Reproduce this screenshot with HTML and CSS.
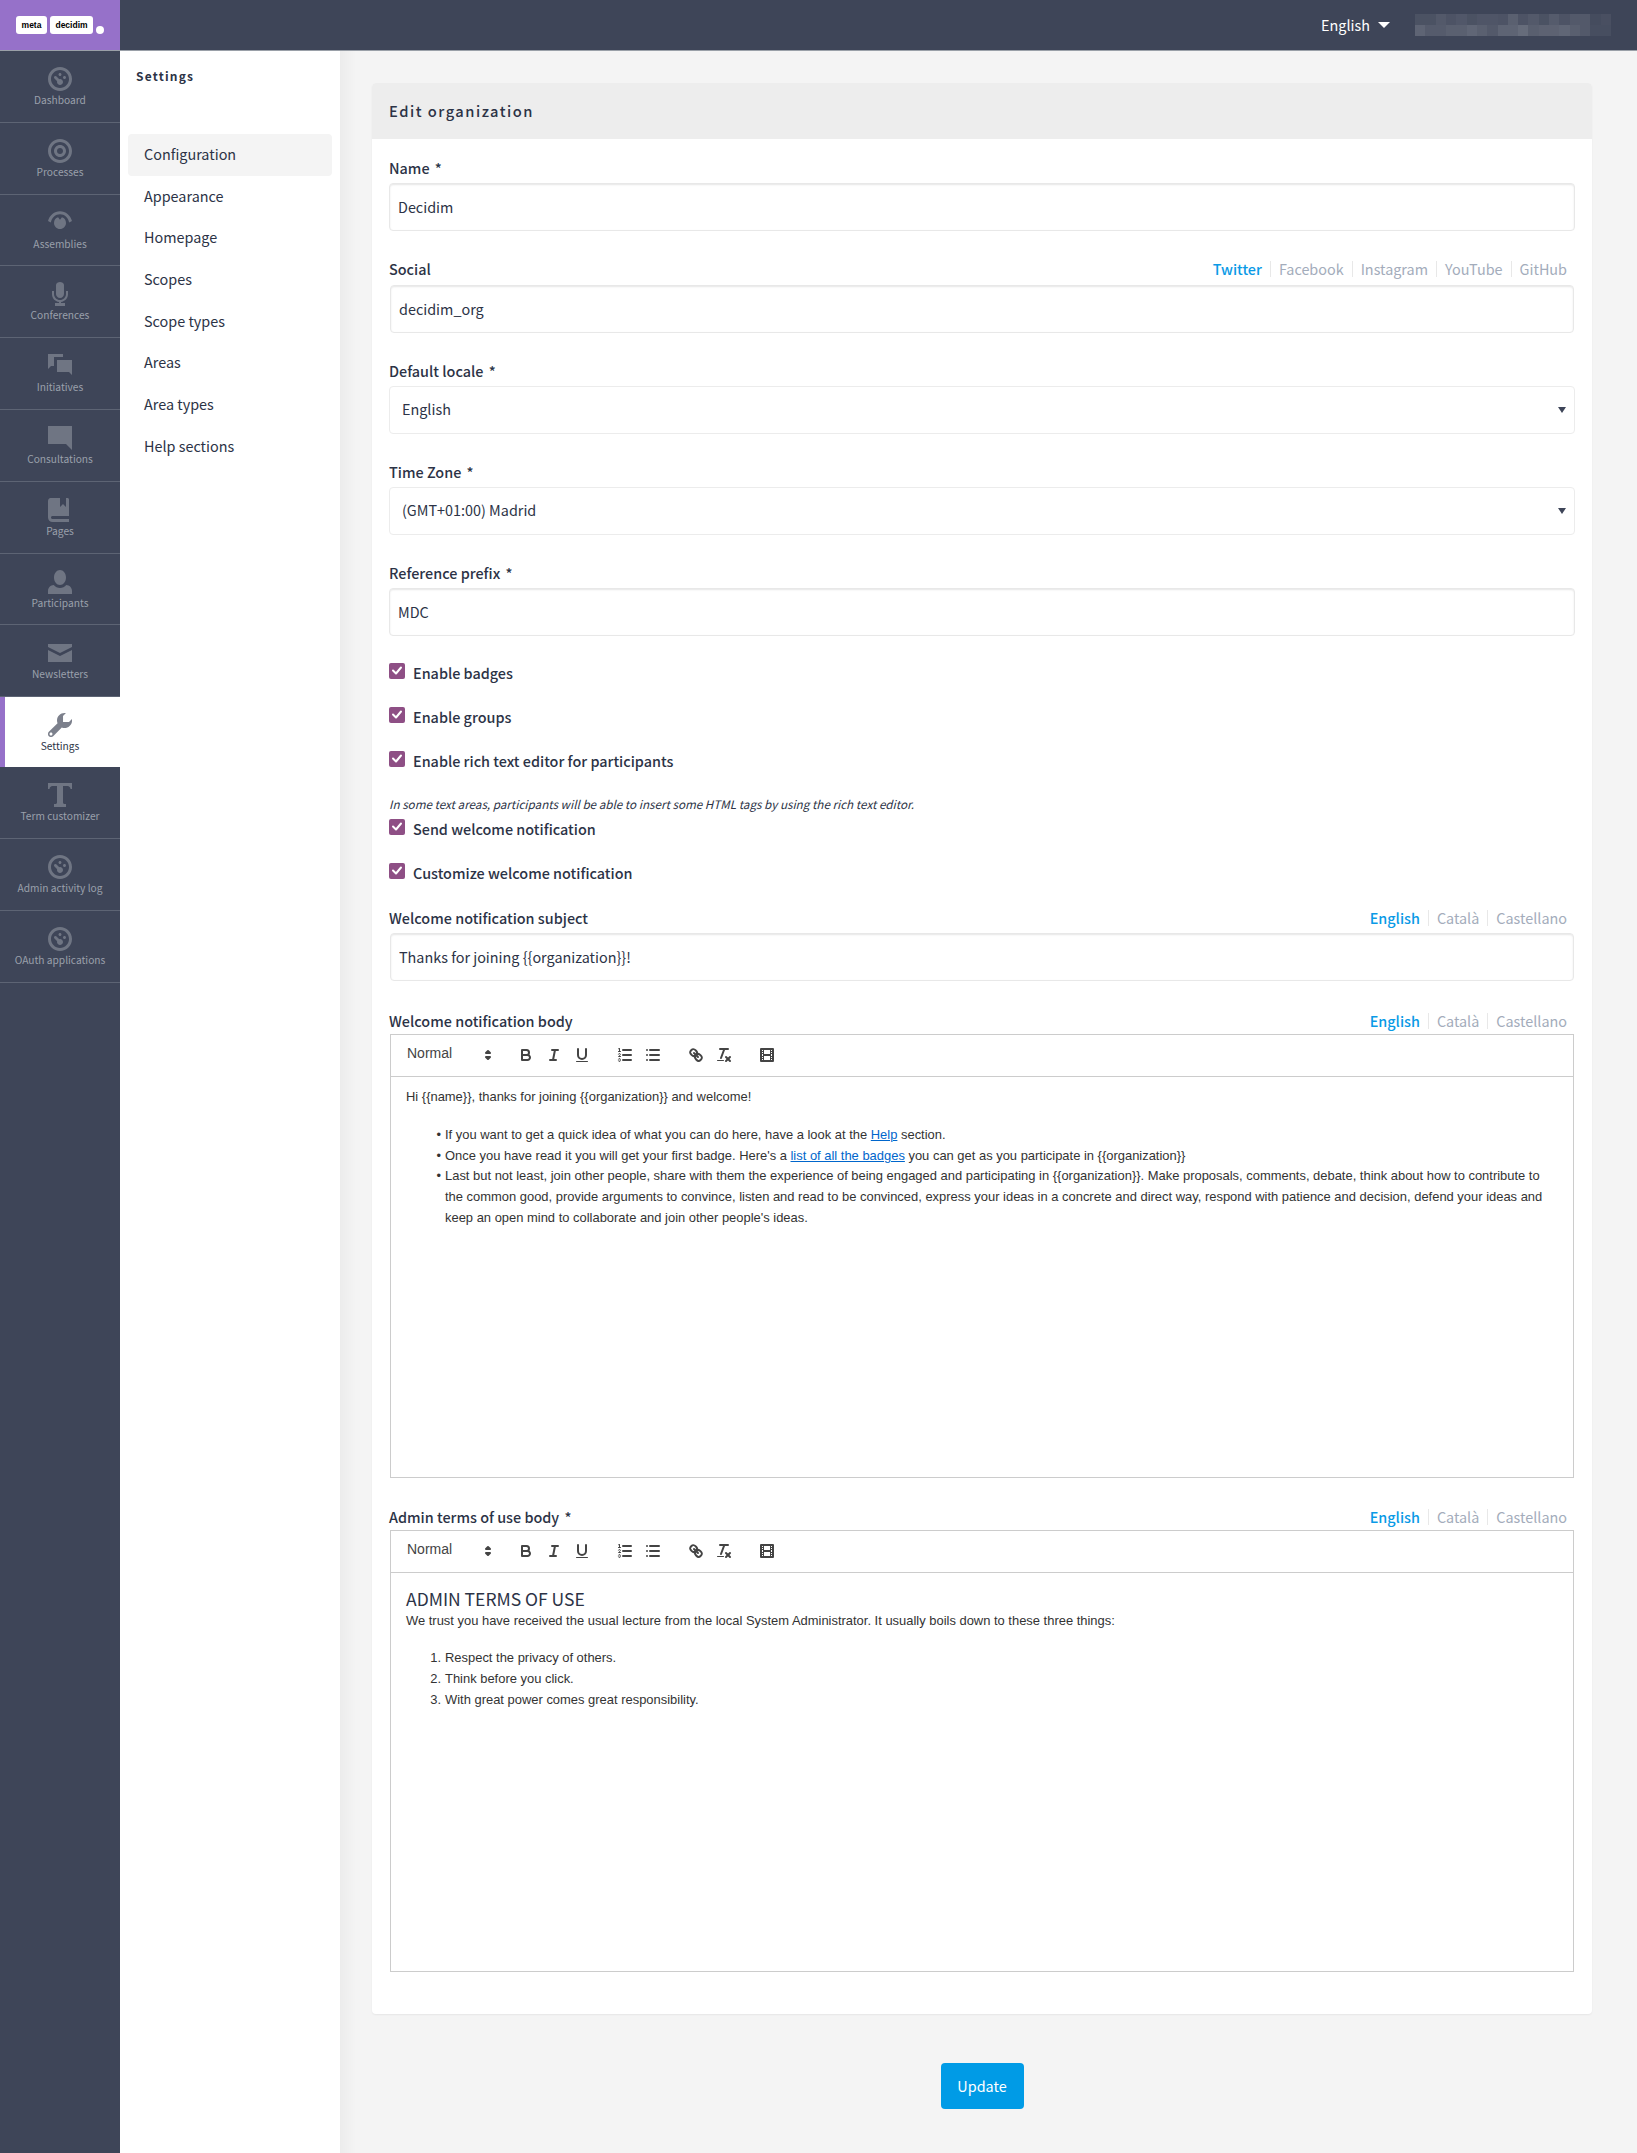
FILE: index.html
```html
<!DOCTYPE html>
<html lang="en">
<head>
<meta charset="utf-8">
<title>Edit organization</title>
<link rel="stylesheet" href="styles.css">
</head>
<body>
<header class="topbar">
  <div class="logo">
    <span class="logo-chip logo-chip-meta">meta</span>
    <span class="logo-chip logo-chip-decidim">decidim</span>
    <span class="logo-dot"></span>
  </div>
  <div class="topbar-right">
    <span class="lang">English</span>
    <span class="lang-caret"></span>
    <svg class="mosaic" width="196" height="22" viewBox="0 0 19 2" preserveAspectRatio="none" shape-rendering="crispEdges">
      <g fill="#fff">
        <rect x="0" y="0" width="2" height="1" opacity=".07"/><rect x="2" y="0" width="1" height="1" opacity=".11"/><rect x="3" y="0" width="1" height="1" opacity=".08"/><rect x="4" y="0" width="1" height="1" opacity=".1"/><rect x="5" y="0" width="1" height="1" opacity=".07"/><rect x="6" y="0" width="2" height="1" opacity=".09"/><rect x="8" y="0" width="1" height="1" opacity=".08"/><rect x="9" y="0" width="1" height="1" opacity=".15"/><rect x="10" y="0" width="1" height="1" opacity=".08"/><rect x="11" y="0" width="1" height="1" opacity=".11"/><rect x="12" y="0" width="1" height="1" opacity=".07"/><rect x="13" y="0" width="1" height="1" opacity=".12"/><rect x="14" y="0" width="1" height="1" opacity=".08"/><rect x="15" y="0" width="2" height="1" opacity=".11"/><rect x="17" y="0" width="1" height="1" opacity=".04"/><rect x="18" y="0" width="1" height="1" opacity=".06"/>
        <rect x="0" y="1" width="1" height="1" opacity=".17"/><rect x="1" y="1" width="2" height="1" opacity=".12"/><rect x="3" y="1" width="2" height="1" opacity=".15"/><rect x="5" y="1" width="1" height="1" opacity=".18"/><rect x="6" y="1" width="1" height="1" opacity=".15"/><rect x="7" y="1" width="1" height="1" opacity=".11"/><rect x="8" y="1" width="2" height="1" opacity=".17"/><rect x="10" y="1" width="1" height="1" opacity=".21"/><rect x="11" y="1" width="1" height="1" opacity=".14"/><rect x="12" y="1" width="2" height="1" opacity=".16"/><rect x="14" y="1" width="1" height="1" opacity=".18"/><rect x="15" y="1" width="1" height="1" opacity=".14"/><rect x="16" y="1" width="1" height="1" opacity=".11"/><rect x="17" y="1" width="1" height="1" opacity=".05"/><rect x="18" y="1" width="1" height="1" opacity=".05"/>
      </g>
    </svg>
  </div>
</header>

<div class="shell">
  <nav class="rail">
    <a class="rail-item"><svg class="rail-icon" viewBox="0 0 8 8"><path d="M4 0c-2.2 0-4 1.8-4 4s1.8 4 4 4 4-1.8 4-4-1.8-4-4-4zm0 1c1.66 0 3 1.34 3 3s-1.34 3-3 3-3-1.34-3-3 1.34-3 3-3zm0 1c-.28 0-.5.22-.5.5s.22.5.5.5.5-.22.5-.5-.22-.5-.5-.5zm-1.66 1a.5.5 0 0 0-.19.84l.91.91c-.02.08-.06.16-.06.25 0 .55.45 1 1 1s1-.45 1-1-.45-1-1-1c-.09 0-.17.04-.25.06l-.91-.91a.5.5 0 0 0-.44-.16.5.5 0 0 0-.06 0zm3.16 0c-.28 0-.5.22-.5.5s.22.5.5.5.5-.22.5-.5-.22-.5-.5-.5z"/></svg><span>Dashboard</span></a>
    <a class="rail-item"><svg class="rail-icon" viewBox="0 0 8 8"><path d="M4 0c-2.2 0-4 1.8-4 4s1.8 4 4 4 4-1.8 4-4-1.8-4-4-4zm0 1c1.66 0 3 1.34 3 3s-1.34 3-3 3-3-1.34-3-3 1.34-3 3-3zm0 1c-1.1 0-2 .9-2 2s.9 2 2 2 2-.9 2-2-.9-2-2-2zm0 1c.56 0 1 .44 1 1s-.44 1-1 1-1-.44-1-1 .44-1 1-1z"/></svg><span>Processes</span></a>
    <a class="rail-item"><svg class="rail-icon" viewBox="0 0 8 8"><path d="M4 .1C2.1.1.5 1.5 0 3.3l.95.55C1.3 2.2 2.5 1.1 4 1.1s2.7 1.1 3.05 2.75L8 3.3C7.5 1.5 5.9.1 4 .1z"/><path d="M3.35 2.1 4 2.9l.65-.8C5.5 2.35 6 3.1 6 4c0 1.1-.9 2-2 2s-2-.9-2-2c0-.9.5-1.65 1.35-1.9z"/></svg><span>Assemblies</span></a>
    <a class="rail-item"><svg class="rail-icon" viewBox="0 0 8 8"><path d="M4 0c-.55 0-1.33.35-1.33 1v3c0 .7.6 1.33 1.33 1.33S5.33 4.7 5.33 4V1C5.33.35 4.55 0 4 0z"/><path d="M1.33 3h.67v1c0 1.1.9 2 2 2s2-.9 2-2V3h.67v1c0 1.4-1 2.5-2.33 2.65V7h1.33v1H2.33V7h1.34v-.35C2.33 6.5 1.33 5.4 1.33 4V3z"/></svg><span>Conferences</span></a>
    <a class="rail-item"><svg class="rail-icon" viewBox="0 0 8 8"><path d="M0 0v5l1-1h1v-3h3v-1h-5zm3 2v4h4l1 1v-5h-5z"/></svg><span>Initiatives</span></a>
    <a class="rail-item"><svg class="rail-icon" viewBox="0 0 8 8"><path d="M.09 0c-.06 0-.09.04-.09.09v5.81c0 .05.04.09.09.09h5.91l2 2v-7.91c0-.06-.04-.09-.09-.09h-7.81z"/></svg><span>Consultations</span></a>
    <a class="rail-item"><svg class="rail-icon" viewBox="0 0 8 8"><path d="M1 0c-.07 0-.13.01-.19.03-.39.08-.7.39-.78.78-.03.06-.03.12-.03.19v5.5c0 .83.67 1.5 1.5 1.5h5.5v-1h-5.5c-.28 0-.5-.22-.5-.5s.22-.5.5-.5h5.5v-5.5c0-.28-.22-.5-.5-.5h-.5v3l-1-1-1 1v-3h-3z"/></svg><span>Pages</span></a>
    <a class="rail-item"><svg class="rail-icon" viewBox="0 0 8 8"><path d="M4 0c-1.1 0-2 1.12-2 2.5s.9 2.5 2 2.5 2-1.12 2-2.5-.9-2.5-2-2.5zm-2.09 5c-1.06.05-1.91.92-1.91 2v1h8v-1c0-1.08-.84-1.95-1.91-2-.54.61-1.28 1-2.09 1-.81 0-1.55-.39-2.09-1z"/></svg><span>Participants</span></a>
    <a class="rail-item"><svg class="rail-icon" viewBox="0 0 8 8"><path d="M0 1v1l4 2 4-2v-1h-8zm0 2v4h8v-4l-4 2-4-2z"/></svg><span>Newsletters</span></a>
    <a class="rail-item rail-item-active"><svg class="rail-icon" viewBox="0 0 8 8"><path d="M5.5 0c-1.38 0-2.5 1.12-2.5 2.5 0 .32.08.62.19.91l-2.91 2.88c-.39.39-.39 1.05 0 1.44.2.2.46.28.72.28.26 0 .52-.09.72-.28l2.88-2.91c.28.11.58.19.91.19 1.38 0 2.5-1.12 2.5-2.5 0-.16 0-.32-.03-.47l-.97.97h-2v-2l.97-.97c-.15-.03-.31-.03-.47-.03zm-4.5 6.5c.28 0 .5.22.5.5s-.22.5-.5.5-.5-.22-.5-.5.22-.5.5-.5z"/></svg><span>Settings</span></a>
    <a class="rail-item"><svg class="rail-icon" viewBox="0 0 8 8"><path d="M0 0v2h.5c0-.55.45-1 1-1h1.5v5.5c0 .28-.22.5-.5.5h-.5v1h4v-1h-.5c-.28 0-.5-.22-.5-.5v-5.5h1.5c.55 0 1 .45 1 1h.5v-2h-8z"/></svg><span>Term customizer</span></a>
    <a class="rail-item"><svg class="rail-icon" viewBox="0 0 8 8"><path d="M4 0c-2.2 0-4 1.8-4 4s1.8 4 4 4 4-1.8 4-4-1.8-4-4-4zm0 1c1.66 0 3 1.34 3 3s-1.34 3-3 3-3-1.34-3-3 1.34-3 3-3zm0 1c-.28 0-.5.22-.5.5s.22.5.5.5.5-.22.5-.5-.22-.5-.5-.5zm-1.66 1a.5.5 0 0 0-.19.84l.91.91c-.02.08-.06.16-.06.25 0 .55.45 1 1 1s1-.45 1-1-.45-1-1-1c-.09 0-.17.04-.25.06l-.91-.91a.5.5 0 0 0-.44-.16.5.5 0 0 0-.06 0zm3.16 0c-.28 0-.5.22-.5.5s.22.5.5.5.5-.22.5-.5-.22-.5-.5-.5z"/></svg><span>Admin activity log</span></a>
    <a class="rail-item"><svg class="rail-icon" viewBox="0 0 8 8"><path d="M4 0c-2.2 0-4 1.8-4 4s1.8 4 4 4 4-1.8 4-4-1.8-4-4-4zm0 1c1.66 0 3 1.34 3 3s-1.34 3-3 3-3-1.34-3-3 1.34-3 3-3zm0 1c-.28 0-.5.22-.5.5s.22.5.5.5.5-.22.5-.5-.22-.5-.5-.5zm-1.66 1a.5.5 0 0 0-.19.84l.91.91c-.02.08-.06.16-.06.25 0 .55.45 1 1 1s1-.45 1-1-.45-1-1-1c-.09 0-.17.04-.25.06l-.91-.91a.5.5 0 0 0-.44-.16.5.5 0 0 0-.06 0zm3.16 0c-.28 0-.5.22-.5.5s.22.5.5.5.5-.22.5-.5-.22-.5-.5-.5z"/></svg><span>OAuth applications</span></a>
  </nav>

  <aside class="subnav">
    <h2 class="subnav-title">Settings</h2>
    <ul class="subnav-list">
      <li class="subnav-item subnav-item-active">Configuration</li>
      <li class="subnav-item">Appearance</li>
      <li class="subnav-item">Homepage</li>
      <li class="subnav-item">Scopes</li>
      <li class="subnav-item">Scope types</li>
      <li class="subnav-item">Areas</li>
      <li class="subnav-item">Area types</li>
      <li class="subnav-item">Help sections</li>
    </ul>
  </aside>

  <main class="content">
    <form class="card">
      <h1 class="card-title">Edit organization</h1>
      <div class="card-body">
        <div class="field">
          <div class="label-row"><label class="label">Name <span class="req">*</span></label></div>
          <input class="input" type="text" value="Decidim">
        </div>
        <div class="field field-tabbed">
          <div class="label-row"><label class="label">Social</label>
            <div class="tabs"><a class="tab tab-on">Twitter</a><a class="tab">Facebook</a><a class="tab">Instagram</a><a class="tab">YouTube</a><a class="tab">GitHub</a></div>
          </div>
          <input class="input input-inset" type="text" value="decidim_org">
        </div>
        <div class="field">
          <div class="label-row"><label class="label">Default locale <span class="req">*</span></label></div>
          <div class="select-wrap"><select class="select"><option>English</option></select></div>
        </div>
        <div class="field">
          <div class="label-row"><label class="label">Time Zone <span class="req">*</span></label></div>
          <div class="select-wrap"><select class="select"><option>(GMT+01:00) Madrid</option></select></div>
        </div>
        <div class="field field-prefix">
          <div class="label-row"><label class="label">Reference prefix <span class="req">*</span></label></div>
          <input class="input" type="text" value="MDC">
        </div>

        <div class="check"><span class="box"><svg viewBox="0 0 16 16"><path d="M4 7.5l3 3 5-6"/></svg></span><span class="check-text">Enable badges</span></div>
        <div class="check"><span class="box"><svg viewBox="0 0 16 16"><path d="M4 7.5l3 3 5-6"/></svg></span><span class="check-text">Enable groups</span></div>
        <div class="check check-last"><span class="box"><svg viewBox="0 0 16 16"><path d="M4 7.5l3 3 5-6"/></svg></span><span class="check-text">Enable rich text editor for participants</span></div>
        <p class="help">In some text areas, participants will be able to insert some HTML tags by using the rich text editor.</p>
        <div class="check"><span class="box"><svg viewBox="0 0 16 16"><path d="M4 7.5l3 3 5-6"/></svg></span><span class="check-text">Send welcome notification</span></div>
        <div class="check"><span class="box"><svg viewBox="0 0 16 16"><path d="M4 7.5l3 3 5-6"/></svg></span><span class="check-text">Customize welcome notification</span></div>

        <div class="field field-subject">
          <div class="label-row"><label class="label">Welcome notification subject</label>
            <div class="tabs"><a class="tab tab-on">English</a><a class="tab">Català</a><a class="tab">Castellano</a></div>
          </div>
          <input class="input input-inset" type="text" value="Thanks for joining {{organization}}!">
        </div>

        <div class="field field-editor">
          <div class="label-row"><label class="label">Welcome notification body</label>
            <div class="tabs"><a class="tab tab-on">English</a><a class="tab">Català</a><a class="tab">Castellano</a></div>
          </div>
          <div class="editor">
            <div class="toolbar">
              <span class="picker">Normal<svg class="tool-svg picker-arrow" viewBox="0 0 18 18"><polygon points="7 11 9 13 11 11 7 11"/><polygon points="7 7 9 5 11 7 7 7"/></svg></span>
              <span class="tool-group">
                <svg class="tool-svg" viewBox="0 0 18 18"><path d="M5,4H9.5A2.5,2.5,0,0,1,12,6.5v0A2.5,2.5,0,0,1,9.5,9H5V4Z"/><path d="M5,9h5.5A2.5,2.5,0,0,1,13,11.5v0A2.5,2.5,0,0,1,10.5,14H5V9Z"/></svg>
                <svg class="tool-svg" viewBox="0 0 18 18"><line x1="7" x2="13" y1="4" y2="4"/><line x1="5" x2="11" y1="14" y2="14"/><line x1="8" x2="10" y1="14" y2="4"/></svg>
                <svg class="tool-svg" viewBox="0 0 18 18"><path d="M5,3V9a4.012,4.012,0,0,0,4,4H9a4.012,4.012,0,0,0,4-4V3"/><rect class="fill" height="1" rx="0.5" ry="0.5" width="12" x="3" y="15"/></svg>
              </span>
              <span class="tool-group">
                <svg class="tool-svg" viewBox="0 0 18 18"><line x1="7" x2="15" y1="4" y2="4"/><line x1="7" x2="15" y1="9" y2="9"/><line x1="7" x2="15" y1="14" y2="14"/><line class="thin" x1="2.5" x2="4.5" y1="5.5" y2="5.5"/><path class="fill" d="M3.5,6A0.5,0.5,0,0,1,3,5.5V3.085l-0.276.138A0.5,0.5,0,0,1,2.053,3c-0.124-.247-0.023-0.324.224-0.447l1-.5A0.5,0.5,0,0,1,4,2.5v3A0.5,0.5,0,0,1,3.5,6Z"/><path class="thin" d="M4.5,10.5h-2c0-.234,1.85-1.076,1.85-2.234A0.959,0.959,0,0,0,2.5,8.156"/><path class="thin" d="M2.5,14.846a0.959,0.959,0,0,0,1.85-.109A0.7,0.7,0,0,0,3.75,14a0.688,0.688,0,0,0,.6-0.736,0.959,0.959,0,0,0-1.85-.109"/></svg>
                <svg class="tool-svg" viewBox="0 0 18 18"><line x1="6" x2="15" y1="4" y2="4"/><line x1="6" x2="15" y1="9" y2="9"/><line x1="6" x2="15" y1="14" y2="14"/><line x1="3" x2="3" y1="4" y2="4"/><line x1="3" x2="3" y1="9" y2="9"/><line x1="3" x2="3" y1="14" y2="14"/></svg>
              </span>
              <span class="tool-group">
                <svg class="tool-svg" viewBox="0 0 18 18"><line x1="7" x2="11" y1="7" y2="11"/><path d="M8.9,4.577a3.476,3.476,0,0,1,.36,4.679A3.476,3.476,0,0,1,4.577,8.9C3.185,7.5,2.035,6.4,4.217,4.217S7.5,3.185,8.9,4.577Z"/><path d="M13.423,9.1a3.476,3.476,0,0,0-4.679-.36,3.476,3.476,0,0,0,.36,4.679c1.392,1.392,2.5,2.542,4.679.36S14.815,10.5,13.423,9.1Z"/></svg>
                <svg class="tool-svg" viewBox="0 0 18 18"><line x1="5" x2="13" y1="3" y2="3"/><line x1="6" x2="9.35" y1="12" y2="3"/><line x1="11" x2="15" y1="11" y2="15"/><line x1="15" x2="11" y1="11" y2="15"/><rect class="fill" height="1" rx="0.5" ry="0.5" width="7" x="2" y="14"/></svg>
              </span>
              <span class="tool-group">
                <svg class="tool-svg" viewBox="0 0 18 18"><rect height="12" width="12" x="3" y="3"/><rect class="fill" height="12" width="1" x="5" y="3"/><rect class="fill" height="12" width="1" x="12" y="3"/><rect class="fill" height="2" width="8" x="5" y="8"/><rect class="fill" height="1" width="3" x="3" y="5"/><rect class="fill" height="1" width="3" x="3" y="7"/><rect class="fill" height="1" width="3" x="3" y="10"/><rect class="fill" height="1" width="3" x="3" y="12"/><rect class="fill" height="1" width="3" x="12" y="5"/><rect class="fill" height="1" width="3" x="12" y="7"/><rect class="fill" height="1" width="3" x="12" y="10"/><rect class="fill" height="1" width="3" x="12" y="12"/></svg>
              </span>
            </div>
            <div class="editor-body">
              <p>Hi {{name}}, thanks for joining {{organization}} and welcome!</p>
              <ul>
                <li>If you want to get a quick idea of what you can do here, have a look at the <a class="link">Help</a> section.</li>
                <li>Once you have read it you will get your first badge. Here's a <a class="link">list of all the badges</a> you can get as you participate in {{organization}}</li>
                <li>Last but not least, join other people, share with them the experience of being engaged and participating in {{organization}}. Make proposals, comments, debate, think about how to contribute to the common good, provide arguments to convince, listen and read to be convinced, express your ideas in a concrete and direct way, respond with patience and decision, defend your ideas and keep an open mind to collaborate and join other people's ideas.</li>
              </ul>
            </div>
          </div>
        </div>

        <div class="field field-editor field-terms">
          <div class="label-row"><label class="label">Admin terms of use body <span class="req">*</span></label>
            <div class="tabs"><a class="tab tab-on">English</a><a class="tab">Català</a><a class="tab">Castellano</a></div>
          </div>
          <div class="editor">
            <div class="toolbar">
              <span class="picker">Normal<svg class="tool-svg picker-arrow" viewBox="0 0 18 18"><polygon points="7 11 9 13 11 11 7 11"/><polygon points="7 7 9 5 11 7 7 7"/></svg></span>
              <span class="tool-group">
                <svg class="tool-svg" viewBox="0 0 18 18"><path d="M5,4H9.5A2.5,2.5,0,0,1,12,6.5v0A2.5,2.5,0,0,1,9.5,9H5V4Z"/><path d="M5,9h5.5A2.5,2.5,0,0,1,13,11.5v0A2.5,2.5,0,0,1,10.5,14H5V9Z"/></svg>
                <svg class="tool-svg" viewBox="0 0 18 18"><line x1="7" x2="13" y1="4" y2="4"/><line x1="5" x2="11" y1="14" y2="14"/><line x1="8" x2="10" y1="14" y2="4"/></svg>
                <svg class="tool-svg" viewBox="0 0 18 18"><path d="M5,3V9a4.012,4.012,0,0,0,4,4H9a4.012,4.012,0,0,0,4-4V3"/><rect class="fill" height="1" rx="0.5" ry="0.5" width="12" x="3" y="15"/></svg>
              </span>
              <span class="tool-group">
                <svg class="tool-svg" viewBox="0 0 18 18"><line x1="7" x2="15" y1="4" y2="4"/><line x1="7" x2="15" y1="9" y2="9"/><line x1="7" x2="15" y1="14" y2="14"/><line class="thin" x1="2.5" x2="4.5" y1="5.5" y2="5.5"/><path class="fill" d="M3.5,6A0.5,0.5,0,0,1,3,5.5V3.085l-0.276.138A0.5,0.5,0,0,1,2.053,3c-0.124-.247-0.023-0.324.224-0.447l1-.5A0.5,0.5,0,0,1,4,2.5v3A0.5,0.5,0,0,1,3.5,6Z"/><path class="thin" d="M4.5,10.5h-2c0-.234,1.85-1.076,1.85-2.234A0.959,0.959,0,0,0,2.5,8.156"/><path class="thin" d="M2.5,14.846a0.959,0.959,0,0,0,1.85-.109A0.7,0.7,0,0,0,3.75,14a0.688,0.688,0,0,0,.6-0.736,0.959,0.959,0,0,0-1.85-.109"/></svg>
                <svg class="tool-svg" viewBox="0 0 18 18"><line x1="6" x2="15" y1="4" y2="4"/><line x1="6" x2="15" y1="9" y2="9"/><line x1="6" x2="15" y1="14" y2="14"/><line x1="3" x2="3" y1="4" y2="4"/><line x1="3" x2="3" y1="9" y2="9"/><line x1="3" x2="3" y1="14" y2="14"/></svg>
              </span>
              <span class="tool-group">
                <svg class="tool-svg" viewBox="0 0 18 18"><line x1="7" x2="11" y1="7" y2="11"/><path d="M8.9,4.577a3.476,3.476,0,0,1,.36,4.679A3.476,3.476,0,0,1,4.577,8.9C3.185,7.5,2.035,6.4,4.217,4.217S7.5,3.185,8.9,4.577Z"/><path d="M13.423,9.1a3.476,3.476,0,0,0-4.679-.36,3.476,3.476,0,0,0,.36,4.679c1.392,1.392,2.5,2.542,4.679.36S14.815,10.5,13.423,9.1Z"/></svg>
                <svg class="tool-svg" viewBox="0 0 18 18"><line x1="5" x2="13" y1="3" y2="3"/><line x1="6" x2="9.35" y1="12" y2="3"/><line x1="11" x2="15" y1="11" y2="15"/><line x1="15" x2="11" y1="11" y2="15"/><rect class="fill" height="1" rx="0.5" ry="0.5" width="7" x="2" y="14"/></svg>
              </span>
              <span class="tool-group">
                <svg class="tool-svg" viewBox="0 0 18 18"><rect height="12" width="12" x="3" y="3"/><rect class="fill" height="12" width="1" x="5" y="3"/><rect class="fill" height="12" width="1" x="12" y="3"/><rect class="fill" height="2" width="8" x="5" y="8"/><rect class="fill" height="1" width="3" x="3" y="5"/><rect class="fill" height="1" width="3" x="3" y="7"/><rect class="fill" height="1" width="3" x="3" y="10"/><rect class="fill" height="1" width="3" x="3" y="12"/><rect class="fill" height="1" width="3" x="12" y="5"/><rect class="fill" height="1" width="3" x="12" y="7"/><rect class="fill" height="1" width="3" x="12" y="10"/><rect class="fill" height="1" width="3" x="12" y="12"/></svg>
              </span>
            </div>
            <div class="editor-body">
              <h2 class="terms-heading">ADMIN TERMS OF USE</h2>
              <p>We trust you have received the usual lecture from the local System Administrator. It usually boils down to these three things:</p>
              <ol>
                <li>Respect the privacy of others.</li>
                <li>Think before you click.</li>
                <li>With great power comes great responsibility.</li>
              </ol>
            </div>
          </div>
        </div>
      </div>
    </form>
    <div class="actions"><button class="update" type="button">Update</button></div>
  </main>
</div>
</body>
</html>
```
FILE: styles.css
```css
* { box-sizing: border-box; }
html, body { margin: 0; padding: 0; }
body {
  width: 1637px;
  font-family: "Noto Sans CJK JP", "Noto Sans", sans-serif;
  font-size: 14.4px;
  color: #2c3346;
  background: #f4f4f4;
}
a { text-decoration: none; }

.topbar {
  height: 51px;
  display: flex;
  justify-content: space-between;
  background: #3e4558;
  border-bottom: 1px solid #9aa0a8;
}
.logo {
  width: 120px;
  height: 50px;
  background: #9671c9;
  display: flex;
  align-items: flex-start;
  padding: 16px 0 0 16px;
  gap: 3px;
  position: relative;
}
.logo-chip {
  height: 18px;
  background: #fff;
  border-radius: 3px;
  color: #000;
  font: 700 8.5px/18px "Liberation Sans", sans-serif;
  text-align: center;
}
.logo-chip-meta { width: 31px; }
.logo-chip-decidim { width: 43px; }
.logo-dot {
  position: absolute;
  left: 96px;
  top: 26px;
  width: 8px;
  height: 8px;
  border-radius: 50%;
  background: #fff;
}
.topbar-right {
  display: flex;
  align-items: center;
  padding-right: 26px;
}
.lang { color: #fff; font-size: 14.4px; line-height: 22px; margin-right: 8px; }
.lang-caret {
  width: 0;
  height: 0;
  border-left: 6px solid transparent;
  border-right: 6px solid transparent;
  border-top: 6px solid #fff;
  margin-right: 25px;
}
.mosaic { display: block; }

.shell { display: flex; align-items: stretch; }

.rail { width: 120px; flex: none; background: #3e4558; display: flex; flex-direction: column; }
.rail-item {
  height: 71.8px;
  flex: none;
  border-bottom: 1px solid #5d6474;
  padding-top: 16px;
  display: flex;
  flex-direction: column;
  align-items: center;
  color: #9aa0ab;
  font-size: 10.2px;
  line-height: 18px;
}
.rail-icon { width: 24px; height: 24px; fill: #6f7583; display: block; }
.rail-item-active {
  height: 70px;
  background: #fff;
  border-bottom: 0;
  border-left: 5px solid #9671c9;
  padding-right: 5px;
  color: #2c3346;
}
.rail-item-active .rail-icon { fill: #7c808c; }

.subnav { width: 220px; flex: none; background: #fff; padding: 16px 8px 0; }
.subnav-title {
  margin: 0 0 49px 8px;
  font-size: 12px;
  line-height: 18px;
  font-weight: 700;
  letter-spacing: 1.2px;
}
.subnav-list { list-style: none; margin: 0; padding: 0; }
.subnav-item {
  height: 41.7px;
  padding-left: 16px;
  font-size: 14.4px;
  line-height: 40px;
  border-radius: 4px;
}
.subnav-item-active { background: #f4f4f4; }

.content {
  flex: 1;
  min-width: 0;
  padding: 32px 45px 44px 32px;
  background: linear-gradient(to right, #ececec, #f4f4f4 16px);
}
.card {
  display: block;
  background: #fff;
  border-radius: 4px;
  box-shadow: 0 1px 2px rgba(0,0,0,.06);
}
.card-title {
  margin: 0;
  height: 56px;
  padding-left: 17px;
  background: #ededed;
  border-radius: 4px 4px 0 0;
  font-size: 14.7px;
  line-height: 56px;
  font-weight: 500;
  letter-spacing: 1.5px;
}
.card-body { padding: 15px 17px 42px; }

.field { margin-bottom: 24px; }
.label-row {
  display: flex;
  justify-content: space-between;
  align-items: center;
  height: 29px;
}
.field-tabbed .label-row { height: 30px; }
.label { font-size: 14.4px; line-height: 22px; font-weight: 500; padding-bottom: 2px; }
.req { margin-left: 2px; }
.tabs { display: flex; font-size: 14.4px; line-height: 16px; padding-bottom: 2px; }
.tab { color: #a3acbb; padding: 0 8px; border-left: 1px solid #e8e8e8; }
.tab:first-child { border-left: 0; }
.tab-on { color: #0a9ae6; font-weight: 500; }

.input {
  display: block;
  width: 100%;
  height: 48px;
  padding: 0 8px 2px;
  border: 1px solid #e8e8e8;
  border-radius: 4px;
  background: #fff;
  box-shadow: inset 0 1px 2px rgba(0,0,0,.1);
  font: 400 14.4px/22px "Noto Sans CJK JP", "Noto Sans", sans-serif;
  color: #2c3346;
  outline: 0;
}
.input-inset { width: calc(100% - 2px); margin-left: 1px; }

.select-wrap { position: relative; }
.select-wrap::after {
  content: "";
  position: absolute;
  right: 9px;
  top: 21px;
  border-left: 4.5px solid transparent;
  border-right: 4.5px solid transparent;
  border-top: 6px solid #3e4558;
}
.select {
  display: block;
  width: 100%;
  height: 48px;
  padding: 0 12px 2px;
  border: 1px solid #ececec;
  border-radius: 4px;
  background: #fff;
  appearance: none;
  -webkit-appearance: none;
  font: 400 14.4px/22px "Noto Sans CJK JP", "Noto Sans", sans-serif;
  color: #2c3346;
  outline: 0;
}

.field-prefix { margin-bottom: 27px; }
.check { display: flex; align-items: flex-start; height: 44px; }
.check-last { height: 42px; }
.box {
  width: 16px;
  height: 16px;
  flex: none;
  margin-right: 8px;
  border-radius: 2px;
  background: #8e4f85;
}
.box svg { display: block; width: 16px; height: 16px; fill: none; stroke: #fff; stroke-width: 2; stroke-linecap: round; stroke-linejoin: round; }
.check-text { font-size: 14.4px; line-height: 22px; font-weight: 500; margin-top: -1px; }
.help {
  margin: 0 0 5px;
  padding-top: 1px;
  height: 21px;
  font-size: 11.66px;
  line-height: 20px;
  font-style: italic;
}
.field-subject { margin-top: -3px; margin-bottom: 28px; }
.field-editor { margin-bottom: 27px; }
.field-terms { margin-bottom: 0; }

.editor { margin-left: 1px; margin-right: 1px; border: 1px solid #ccc; height: 444px; }
.field-terms .editor { height: 442px; }
.field-editor .label-row { height: 25px; }
.toolbar {
  height: 42px;
  padding: 8px;
  border-bottom: 1px solid #ccc;
  display: flex;
  align-items: flex-start;
}
.picker {
  position: relative;
  width: 98px;
  height: 24px;
  flex: none;
  padding-left: 8px;
  margin-right: 15px;
  font: 14px/20px "Liberation Sans", sans-serif;
  color: #444;
}
.picker-arrow { position: absolute; right: 0; top: 3px; }
.tool-group { display: flex; margin-right: 15px; flex: none; }
.tool-svg {
  display: block;
  width: 18px;
  height: 18px;
  fill: none;
  stroke: #444;
  stroke-width: 2;
  stroke-linecap: round;
  stroke-linejoin: round;
}
.tool-group .tool-svg { width: 28px; height: 24px; padding: 3px 5px; }
.tool-svg .fill { fill: #444; stroke: none; }
.tool-svg .thin { stroke-width: 1; }
.picker-arrow polygon { fill: none; }

.editor-body {
  padding: 10px 15px;
  font: 12.94px/20.8px "Liberation Sans", sans-serif;
  color: #333;
}
.editor-body p { margin: 0 0 17px; }
.editor-body ul, .editor-body ol { margin: 0; padding: 0 0 0 19.5px; list-style: none; counter-reset: item; }
.editor-body li { position: relative; padding-left: 19.5px; counter-increment: item; }
.editor-body ul li::before, .editor-body ol li::before {
  position: absolute;
  left: -4px;
  width: 19.6px;
  text-align: right;
}
.editor-body ul li::before { content: "\2022"; }
.editor-body ol li::before { content: counter(item) "."; }
.link { color: #0066cc; text-decoration: underline; }
.terms-heading {
  margin: 0 0 -4.4px;
  font-family: "Noto Sans CJK JP", "Noto Sans", sans-serif;
  font-size: 17.5px;
  line-height: 32px;
  font-weight: 400;
  color: #2c3346;
}

.actions { display: flex; justify-content: center; padding-top: 49px; }
.update {
  width: 83px;
  height: 46px;
  border: 0;
  border-radius: 4px;
  background: #009be6;
  color: #fff;
  font: 400 14.4px/22px "Noto Sans CJK JP", "Noto Sans", sans-serif;
}
```
